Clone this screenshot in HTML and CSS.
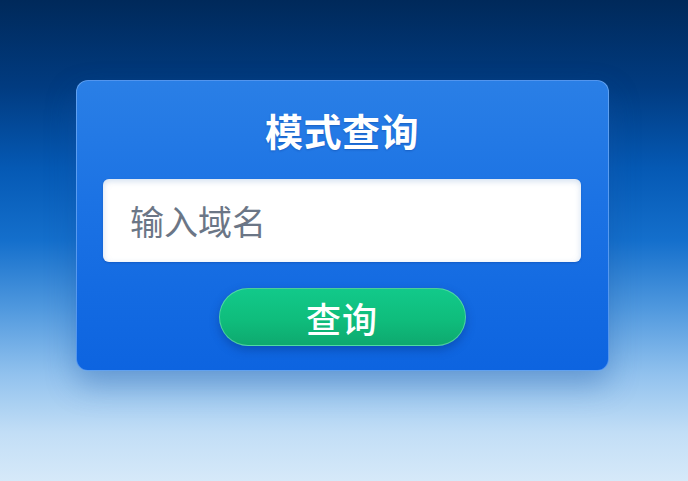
FILE: index.html
```html
<!DOCTYPE html>
<html lang="zh-CN">
<head>
<meta charset="utf-8">
<title>模式查询</title>
<link rel="stylesheet" href="styles.css">
</head>
<body>
<main class="page">
  <section class="card">
    <h1 class="title">模式查询</h1>
    <div class="input-box">
      <input class="input" type="text" placeholder="输入域名">
    </div>
    <button class="btn" type="button">查询</button>
  </section>
</main>
</body>
</html>
```

FILE: styles.css
```css
html, body {
  margin: 0;
  padding: 0;
}
body {
  width: 688px;
  height: 481px;
  overflow: hidden;
  font-family: "Noto Sans CJK SC", "Noto Sans", sans-serif;
  background: linear-gradient(180deg,
    #00295a 0%,
    #013b80 18%,
    #0559b4 35%,
    #146fcc 50%,
    #4f98de 64%,
    #92c2ee 78%,
    #c2def6 90%,
    #d6e9f9 100%);
}
.page {
  display: flex;
  justify-content: center;
  padding: 80px 4px 0 0;
}
.card {
  width: 533px;
  height: 291px;
  box-sizing: border-box;
  padding: 25px 27px 0;
  border-radius: 12px;
  background: linear-gradient(180deg, #2a7fe6 0%, #1c73e4 40%, #0d64e0 100%);
  border: 1px solid rgba(140, 190, 250, 0.55);
  box-shadow: 0 14px 30px rgba(20, 80, 160, 0.35);
  display: flex;
  flex-direction: column;
  align-items: center;
}
.title {
  margin: 0;
  font-size: 38px;
  line-height: 48px;
  font-weight: 700;
  color: #ffffff;
  letter-spacing: 0.5px;
  text-shadow: 0 1px 2px rgba(0, 40, 120, 0.3);
}
.input-box {
  margin-top: 25px;
  width: 478px;
  height: 83px;
  border-radius: 6px;
  background: #ffffff;
  box-shadow: inset 0 2px 6px rgba(120, 160, 210, 0.35), 0 1px 2px rgba(0, 40, 120, 0.25);
  display: flex;
  align-items: center;
}
.input {
  width: 100%;
  border: none;
  outline: none;
  background: transparent;
  padding: 0 0 0 27px;
  font-family: "Noto Sans CJK SC", "Noto Sans", sans-serif;
  font-size: 34px;
  color: #333;
}
.input::placeholder {
  color: #6b7686;
}
.btn {
  margin-top: 26px;
  width: 247px;
  height: 58px;
  border-radius: 29px;
  border: 1px solid rgba(120, 230, 180, 0.6);
  background: linear-gradient(180deg, #12c98a 0%, #0fbd7c 55%, #0ea96f 100%);
  box-shadow: 0 4px 10px rgba(0, 40, 110, 0.35);
  color: #ffffff;
  font-family: "Noto Sans CJK SC", "Noto Sans", sans-serif;
  font-size: 35px;
  font-weight: 500;
  line-height: 1;
  padding: 0;
  letter-spacing: 1px;
}
```
